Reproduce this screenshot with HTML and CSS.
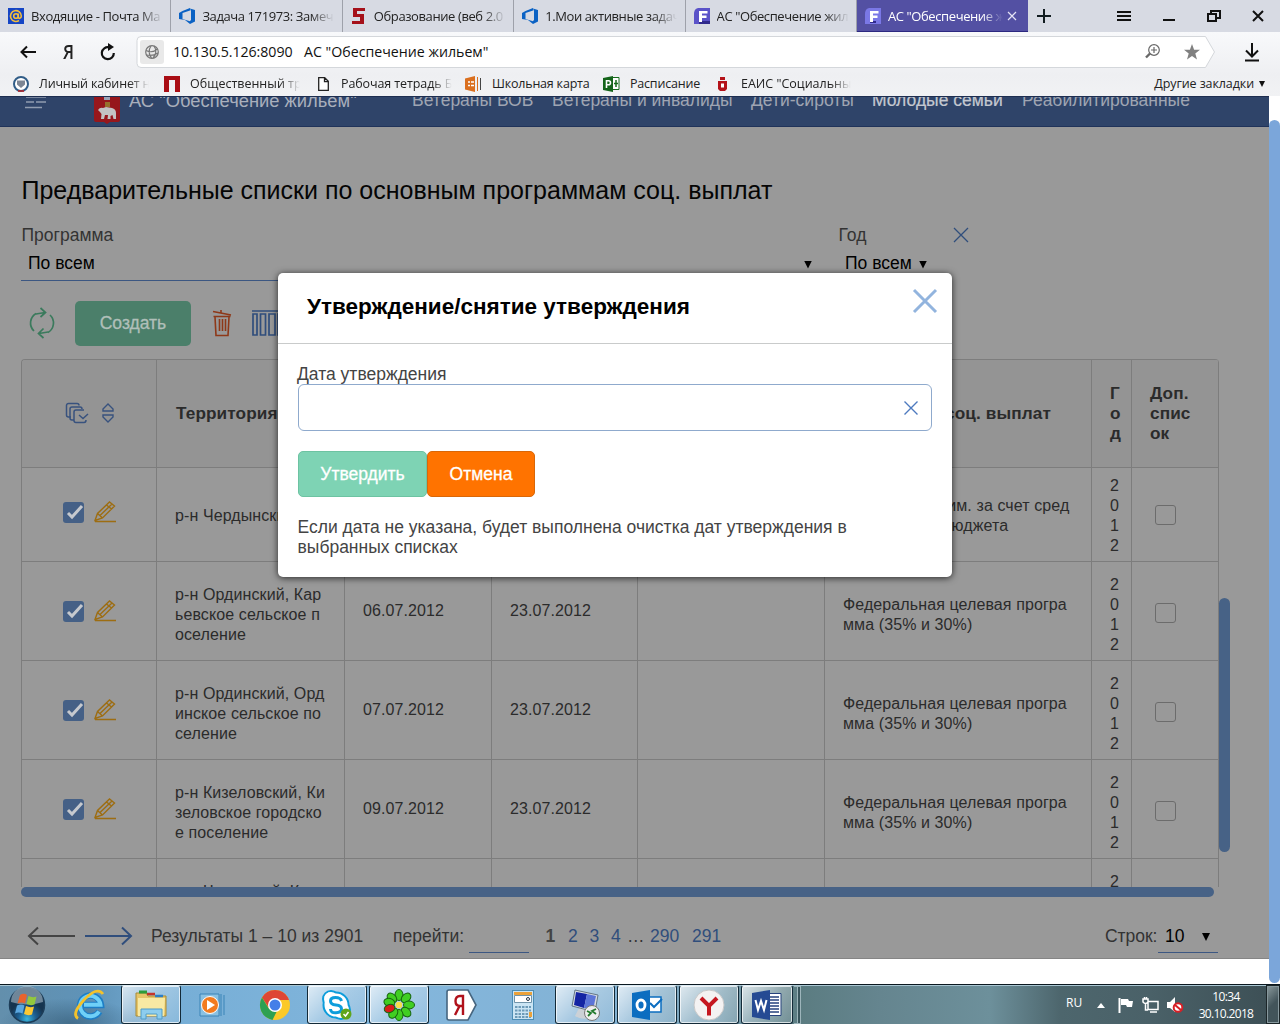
FILE: index.html
```html
<!DOCTYPE html>
<html lang="ru">
<head>
<meta charset="utf-8">
<title>АС "Обеспечение жильем"</title>
<link rel="stylesheet" href="styles.css">
</head>
<body>
<svg class="defs" width="0" height="0">
  <symbol id="devops" viewBox="0 0 16 16"><path fill="#0b62c4" d="M0 5 3.500 3 11 0v2.600L3.500 5v6L11 13.200V16l-5-4-6-1zM11 .5l5 1.500v11.500L11 16v-3.200l1-.6V3.200z"/></symbol>
  <symbol id="flet" viewBox="0 0 16 16"><path fill="#5a52c8" d="M5 0h11v16H0V6C0 2 2 0 5 0z"/><path fill="#302a8c" d="M5 13h11v3H5z"/><path fill="#fff" d="M5 3h8.500v2.500H8V7.500h4.500V10H8v4H5z"/></symbol>
  <symbol id="flet-active" viewBox="0 0 16 16"><path fill="#7a78e6" d="M5 0h11v16H0V6C0 2 2 0 5 0z"/><path fill="#302a8c" d="M5 13h6v2H5z"/><path fill="#fff" d="M5 3h8.500v2.500H8V7.500h4.500V10H8v4H5z"/></symbol>
  <symbol id="pen" viewBox="0 0 22 22"><g fill="none" stroke="#9d6d12" stroke-width="1.400"><path d="M1 20.500h21M1 19.500l2.500-7L15.500 1l5 4L8.500 17zM3.500 12.500l5 4.500M12.500 4l5 4M6 14.500 18 3"/></g></symbol>
  <symbol id="check" viewBox="0 0 21 21"><rect width="21" height="21" rx="3" fill="#456086"/><path d="m5 11 4 4 10-11" fill="none" stroke="#c6c9ce" stroke-width="3"/></symbol>
</svg>

<header class="browser">
  <div class="tabs">
    <div class="tab"><svg width="16" height="16"><rect width="16" height="16" fill="#1545c5"/><g fill="none" stroke="#f2bd3c" stroke-width="1.600"><circle cx="8" cy="8" r="2.300"/><path d="M10.300 5.500v3.500c0 2.200 3 1.500 3-1A5.400 5.400 0 1 0 11 12.500"/></g></svg><span class="fade">Входящие - Почта Ма</span></div>
    <div class="tab"><svg width="16" height="16"><use href="#devops"/></svg><span class="fade">Задача 171973: Замеч</span></div>
    <div class="tab"><svg width="16" height="16"><path fill="#a5111a" d="M2 0h12v3H6v3h7v10H1v-3h8V9H2z"/></svg><span class="fade">Образование (веб 2.0</span></div>
    <div class="tab"><svg width="16" height="16"><use href="#devops"/></svg><span class="fade">1.Мои активные задач</span></div>
    <div class="tab"><svg width="16" height="16"><use href="#flet"/></svg><span class="fade">АС "Обеспечение жил</span></div>
    <div class="tab active"><svg width="16" height="16"><use href="#flet-active"/></svg><span class="fade">АС "Обеспечение ж</span><svg class="tab-x" width="8" height="8"><path d="m0 0 8 8M8 0 0 8" stroke="#e5e3f5" stroke-width="1.200"/></svg></div>
    <svg class="plus" width="14" height="14"><path d="M7 0v14M0 7h14" stroke="#111c20" stroke-width="2"/></svg>
    <div class="window-buttons">
      <svg width="14" height="10"><path d="M0 1h14M0 5h14M0 9h14" stroke="#111" stroke-width="2"/></svg>
      <svg width="12" height="10"><path d="M0 9h12" stroke="#111" stroke-width="2"/></svg>
      <svg width="14" height="12"><g fill="none" stroke="#111" stroke-width="2"><path d="M1 4h8v7H1z"/><path d="M4 4V1h9v7H10"/></g></svg>
      <svg width="10" height="10"><path d="m0 0 10 10M10 0 0 10" stroke="#111" stroke-width="2"/></svg>
    </div>
  </div>
  <div class="address">
    <svg class="back" width="16" height="14"><path d="M16 7H2M7 1.500 1.500 7 7 12.500" fill="none" stroke="#111" stroke-width="2"/></svg>
    <span class="ya">Я</span>
    <svg class="reload" width="16" height="18"><path d="M9 4.300A6 6 0 1 0 13.800 10" fill="none" stroke="#111" stroke-width="2.200"/><path d="M8 0v8l6-4z" fill="#111"/></svg>
    <div class="field">
      <svg class="field-shape" width="1078" height="32"><path d="M4 .5h1064.500l9 15.500-9 15.500H4a4 4 0 0 1-4-4v-23a4 4 0 0 1 4-4z" fill="#fff" stroke="#d4d7db"/></svg>
      <span class="globe"><svg width="14" height="14"><g fill="none" stroke="#777" stroke-width="1.200"><circle cx="7" cy="7" r="6.300"/><path d="M1 5.500C5 7.500 9 7 12.500 4M1.500 10C6 11 10 10 13 8M6 1C3 5 4 10 6.500 13M9 1c3 4 2 9-1 12"/></g></svg></span>
      <span class="host">10.130.5.126:8090</span><span class="page-name">АС "Обеспечение жильем"</span>
      <svg class="loupe" width="15" height="15"><g fill="none" stroke="#686868" stroke-width="1.200"><circle cx="9" cy="6" r="5.300"/><path d="M9 3v6M6 6h6"/><path d="M5 9.500 1 13.500" stroke-width="2.400"/></g></svg>
      <svg class="star" width="16" height="16"><path fill="#808080" d="m8 0 2.100 5.700H16l-4.700 3.700 1.700 6L8 12l-5 3.400 1.700-6L0 5.700h5.900z"/></svg>
    </div>
    <svg class="download" width="16" height="20"><path d="M8 1v13M2 8.500l6 6 6-6M1 18.500h14" fill="none" stroke="#111" stroke-width="2"/></svg>
  </div>
  <div class="bookmarks">
    <span class="bm b1"><svg width="16" height="16"><circle cx="8" cy="8" r="7" fill="#fff" stroke="#315d88" stroke-width="2"/><path d="M4 4.500h8v4L8 12 4 8.500z" fill="#7d8694"/><path d="M5 15h6" stroke="#b22" stroke-width="1.500"/></svg><span class="fade">Личный кабинет н</span></span>
    <span class="bm b2"><svg width="16" height="16"><path fill="#a90d14" d="M0 0h16v16h-5V4H5v12H0z"/></svg><span class="fade">Общественный тр</span></span>
    <span class="bm b3"><svg width="11" height="14"><path d="M.7.7h6l3.600 3.600v9H.7zM6.500 1v3.600h3.500" fill="#fff" stroke="#222" stroke-width="1.300"/></svg><span class="fade">Рабочая тетрадь Б</span></span>
    <span class="bm b4"><svg width="17" height="16"><path fill="#da6f1f" d="M0 2.500 10 0v16L0 13.500z"/><path d="M3 6h2m1 0h3M3 9.500h2m1 0h3" stroke="#fff" stroke-width="1.600"/><path d="M12.500 1v14" stroke="#da6f1f"/><path d="M15.500 2v12" stroke="#444"/></svg><span>Школьная карта</span></span>
    <span class="bm b5"><svg width="17" height="16"><path fill="#fff" stroke="#176c1c" d="M9 1.500h7v12H9z"/><path d="M11 7.500h4M13 4v7" stroke="#176c1c" stroke-width="1.500"/><path fill="#14641a" d="M0 2 10 0v16L0 14z"/><path d="M3.500 12V4.800h2a2 2 0 0 1 0 4h-2" fill="none" stroke="#fff" stroke-width="1.600"/></svg><span>Расписание</span></span>
    <span class="bm b6"><svg width="9" height="14"><path fill="#b41219" d="M2 0h5v3H2zM0 4h9v8l-2 2H2l-2-2z"/><path fill="#fff" d="M3 6.500h3v4H3z"/></svg><span class="fade">ЕАИС "Социальны</span></span>
    <span class="bm others"><span>Другие закладки</span><svg width="6" height="6"><path d="M0 0h6L3 6z" fill="#111"/></svg></span>
  </div>
</header>

<div class="viewport">
  <div class="page">
    <div class="app-header">
      <svg class="burger" width="22" height="14"><path d="M1 1h20M1 6h8M11 6h10M0 11.500h17" stroke="#919cb0" stroke-width="1.300"/></svg>
      <svg class="crest" width="26" height="30"><path fill="#96171c" d="M0 0h26v26q0 2-3 2h-7l-3 2-3-2H3q-3 0-3-2z"/><path d="M11 8h5v5h-5z" fill="#96702c"/><path d="M10 3h6v3h-6z" fill="#9ba3b5"/><path fill="#c3c3c3" d="M4 16q2-3 5-2l3-1 6 1q4 1 4 5v6h-2.500l-1-4-2 1v3h-3l.5-4h-3l-1 4H7l.500-5-1.500-2z"/></svg>
      <span class="brand">АС "Обеспечение жильём"</span>
      <nav><a class="n1">Ветераны ВОВ</a><a class="n2">Ветераны и инвалиды</a><a class="n3">Дети-сироты</a><a class="n4">Молодые семьи</a><a class="n5">Реабилитированные</a></nav>
    </div>
    <main>
      <h1>Предварительные списки по основным программам соц. выплат</h1>
      <div class="filters">
        <div class="filter program"><label>Программа</label><div class="select"><span>По всем</span><i class="caret"></i></div></div>
        <div class="filter year"><label>Год</label><div class="select"><span>По всем</span><i class="caret"></i></div></div>
        <svg class="clear" width="14" height="14"><path d="m0 0 14 14M14 0 0 14" stroke="#304e7c" stroke-width="1.300"/></svg>
      </div>
      <div class="toolbar">
        <svg width="24" height="30"><g fill="none" stroke="#3a7a5c" stroke-width="1.700"><path d="M18 24.500A11 11 0 0 0 20 7M6 5.500A11 11 0 0 0 4 23"/><path d="M10.500 0l5 4.500-5 4.500M13.500 20.500l-5 5 5 4.500M6 6l9-1.500M9 25.500l9-1.500"/></g></svg>
        <span class="create">Создать</span>
        <svg class="trash" width="20" height="27"><g fill="none" stroke="#8e3818" stroke-width="1.600"><path d="M1 1.500l18 3.500M9 3V0M1.500 6.500h17M3 7l1 18.500h12L17 7M7.500 9v12M10.500 9v12M13.500 9v12"/></g></svg>
        <svg class="columns" width="32" height="26"><path d="M0 1h32M1 4h4v21H1zM8.500 4h5v21h-5zM17 4h6v21h-6zM26 4h5v21h-5z" fill="none" stroke="#304e7c" stroke-width="1.700"/></svg>
      </div>
      <div class="table-area">
        <div class="grid">
          <div class="row head">
            <div class="cell pick"><svg width="23" height="21"><g fill="none" stroke="#38527e" stroke-width="1.500"><path d="M5 14H2.500a2 2 0 0 1-2-2V2.500a2 2 0 0 1 2-2H11a2 2 0 0 1 2 2M8 17H6a2 2 0 0 1-2-2V6a2 2 0 0 1 2-2H14a2 2 0 0 1 2 2M20 17q0 2.500-2 2.500h-8a2 2 0 0 1-2-2V9a2 2 0 0 1 2-2h8M13 12l4 3.500 5-4.500"/></g></svg><svg class="sort" width="12" height="20"><path d="M6 1 1 6v2h10V6zM1 12h10v2l-5 5-5-5z" fill="none" stroke="#38527e" stroke-width="1.400"/></svg></div>
            <div class="cell">Территория</div><div class="cell"></div><div class="cell"></div><div class="cell"></div>
            <div class="cell program-name"><span>Программа соц. выплат</span></div><div class="cell narrow">Год</div><div class="cell extra">Доп. список</div>
          </div>
          <div class="row first">
            <div class="cell pick"><svg width="21" height="21"><use href="#check"/></svg><svg class="edit" width="22" height="22"><use href="#pen"/></svg></div>
            <div class="cell">р-н Чердынский</div><div class="cell"></div><div class="cell"></div><div class="cell"></div>
            <div class="cell"><span>Мол семьи прим. за счет сред<br>ств краевого бюджета</span></div><div class="cell narrow">2012</div><div class="cell extra"><i class="box"></i></div>
          </div>
          <div class="row">
            <div class="cell pick"><svg width="21" height="21"><use href="#check"/></svg><svg class="edit" width="22" height="22"><use href="#pen"/></svg></div>
            <div class="cell"><span>р-н Ординский, Кар<br>ьевское сельское п<br>оселение</span></div><div class="cell date">06.07.2012</div><div class="cell date">23.07.2012</div><div class="cell"></div>
            <div class="cell"><span>Федеральная целевая програ<br>мма (35% и 30%)</span></div><div class="cell narrow">2012</div><div class="cell extra"><i class="box"></i></div>
          </div>
          <div class="row">
            <div class="cell pick"><svg width="21" height="21"><use href="#check"/></svg><svg class="edit" width="22" height="22"><use href="#pen"/></svg></div>
            <div class="cell"><span>р-н Ординский, Орд<br>инское сельское по<br>селение</span></div><div class="cell date">07.07.2012</div><div class="cell date">23.07.2012</div><div class="cell"></div>
            <div class="cell"><span>Федеральная целевая програ<br>мма (35% и 30%)</span></div><div class="cell narrow">2012</div><div class="cell extra"><i class="box"></i></div>
          </div>
          <div class="row">
            <div class="cell pick"><svg width="21" height="21"><use href="#check"/></svg><svg class="edit" width="22" height="22"><use href="#pen"/></svg></div>
            <div class="cell"><span>р-н Кизеловский, Ки<br>зеловское городско<br>е поселение</span></div><div class="cell date">09.07.2012</div><div class="cell date">23.07.2012</div><div class="cell"></div>
            <div class="cell"><span>Федеральная целевая програ<br>мма (35% и 30%)</span></div><div class="cell narrow">2012</div><div class="cell extra"><i class="box"></i></div>
          </div>
          <div class="row">
            <div class="cell pick"></div>
            <div class="cell"><span>р-н Чусовской, Кал<br>инское сельское по<br>селение</span></div><div class="cell"></div><div class="cell"></div><div class="cell"></div>
            <div class="cell"></div><div class="cell narrow">2012</div><div class="cell extra"></div>
          </div>
        </div>
        <div class="vbar"></div>
      </div>
      <div class="hbar"></div>
      <div class="pager">
        <svg width="48" height="20"><path d="M48 10H2M11 1.500 2 10l9 8.500" fill="none" stroke="#444" stroke-width="2"/></svg>
        <svg class="next" width="48" height="20"><path d="M0 10h46M37 1.500l9 8.500-9 8.500" fill="none" stroke="#304e7c" stroke-width="2"/></svg>
        <span class="results">Результаты 1 – 10 из 2901</span>
        <span class="goto">перейти:</span><span class="goto-field"></span>
        <span class="p1">1</span><a class="p2">2</a><a class="p3">3</a><a class="p4">4</a><span class="dots">…</span><a class="p290">290</a><a>291</a>
        <span class="rows-label">Строк:</span><span class="rows-select"><span>10</span><i class="caret"></i></span>
      </div>
    </main>
    <div class="dialog">
      <div class="dialog-head"><h2>Утверждение/снятие утверждения</h2><svg width="24" height="24"><path d="m1 1 22 22M23 1 1 23" stroke="#92b4de" stroke-width="3"/></svg></div>
      <div class="dialog-body">
        <label>Дата утверждения</label>
        <div class="date-field"><svg width="14" height="14"><path d="m.5.5 13 13M13.500.5l-13 13" stroke="#4d7abf" stroke-width="1.400"/></svg></div>
        <div class="actions"><span class="btn approve">Утвердить</span><span class="btn cancel">Отмена</span></div>
        <p>Если дата не указана, будет выполнена очистка дат утверждения в<br>выбранных списках</p>
      </div>
    </div>
  </div>
  <div class="page-scroll"><div class="page-thumb"></div></div>
</div>

<footer class="taskbar">
  <span class="task start"><svg width="38" height="38" viewBox="0 0 38 38"><defs><radialGradient id="orb" cy=".9"><stop stop-color="#3ab6dc"/><stop offset=".5" stop-color="#1c5f92"/><stop offset="1" stop-color="#16344f"/></radialGradient></defs><circle cx="19" cy="19" r="17.500" fill="url(#orb)" stroke="#1d3d58" stroke-width="1.500"/><path d="M3 16a16 16 0 0 1 32 0q-16 5-32 0z" fill="#dceaf4" opacity=".45"/><path fill="#e9632d" d="M12 9q4-2.500 7 0l-2 8.500q-4-2-7.500 0z"/><path fill="#93c83d" d="M20.500 10q4 2 8 .5l-2 8q-4 1.500-8-.5z"/><path fill="#5aa7e0" d="M9 19.500q4-2 7.500 0l-2 8q-4-2-7.500 0z"/><path fill="#fbc833" d="M18 20q4 2 8 .5l-2 8q-4 1.500-8-.5z"/></svg></span>
  <span class="task"><svg width="32" height="32" viewBox="0 0 32 32"><path d="M26.500 22.500A10.500 10.500 0 1 1 28 16H10" fill="none" stroke="#1d7ec6" stroke-width="6.500"/><path d="M26 22.500A10.200 10.200 0 1 1 27.500 15.800H11" fill="none" stroke="#6fd0f7" stroke-width="4"/><path d="M5 29.500Q-2 25 11 11T30 5" fill="none" stroke="#f4c22b" stroke-width="2.800"/></svg></span>
  <span class="task open"><svg width="34" height="32" viewBox="0 0 34 32"><path fill="#e6c568" stroke="#a88a35" d="M2 4h10l2 3h18v20H2z"/><path fill="#f8e9a3" d="M4 9h27l-1 18H4z"/><path d="M5 3h8" stroke="#2c9c3b" stroke-width="3"/><path d="M13 5h8" stroke="#c5342b" stroke-width="2.500"/><path d="M21 7h8" stroke="#2c7ec5" stroke-width="2.500"/><path d="M7 30V20h21v10h-5v-5H12v5z" fill="#8dcdee" stroke="#4f9cc9"/></svg></span>
  <span class="task"><svg width="28" height="28" viewBox="0 0 28 28"><path fill="#8ac1e2" stroke="#3b84b7" d="M1 3h19v22H1zM22 3v22M25 4v20"/><circle cx="11" cy="14" r="8.500" fill="#f27b1f" stroke="#fff"/><path d="m8 9 8 5-8 5z" fill="#fff"/></svg></span>
  <span class="task"><svg width="30" height="30" viewBox="0 0 30 30"><circle cx="15" cy="15" r="15" fill="#fbc928"/><path fill="#de4634" d="M2 7.500A15 15 0 0 1 28 7.500L29 10H15L9 18z"/><path fill="#2ea052" d="M2 7.500 8.500 18l8 4-4 7.900A15 15 0 0 1 2 7.500z"/><circle cx="15" cy="15" r="7" fill="#fff"/><circle cx="15" cy="15" r="5.500" fill="#447fe8"/></svg></span>
  <span class="task open"><svg width="32" height="32" viewBox="0 0 32 32"><g fill="#fff" stroke="#0d9ddb" stroke-width="2"><circle cx="10" cy="10" r="8"/><circle cx="20" cy="21" r="9"/></g><circle cx="15" cy="16" r="12.500" fill="#fff" stroke="#0d9ddb" stroke-width="2"/><circle cx="10" cy="10" r="7" fill="#fff"/><circle cx="20" cy="21" r="8" fill="#fff"/><path d="M20.500 12q-1-3.500-6-3.500t-5 3.500 5.500 4 5.500 4-5.500 3.800-5.500-3.800" fill="none" stroke="#0d9ddb" stroke-width="3"/><circle cx="25" cy="25" r="5.500" fill="#60a51b"/><path d="m22.500 25 2 2 3-4" fill="none" stroke="#fff" stroke-width="1.500"/></svg></span>
  <span class="task open"><svg width="32" height="32" viewBox="0 0 32 32"><g fill="#41ce22" stroke="#17640e"><ellipse cx="16" cy="6" rx="4" ry="5.500"/><ellipse cx="16" cy="6" rx="4" ry="5.500" transform="rotate(45 16 16)"/><ellipse cx="16" cy="6" rx="4" ry="5.500" transform="rotate(90 16 16)"/><ellipse cx="16" cy="6" rx="4" ry="5.500" transform="rotate(135 16 16)"/><ellipse cx="16" cy="6" rx="4" ry="5.500" transform="rotate(180 16 16)"/><ellipse cx="16" cy="6" rx="4" ry="5.500" transform="rotate(215 16 16)"/><ellipse cx="16" cy="6" rx="4" ry="5.500" transform="rotate(315 16 16)"/><ellipse cx="16" cy="6" rx="4" ry="5.500" transform="rotate(285 16 16)"/><ellipse cx="16" cy="6" rx="4" ry="5.500" fill="#d81d1b" transform="rotate(250 16 16)"/></g><circle cx="16" cy="16" r="3.200" fill="#f9de49"/></svg></span>
  <span class="task"><svg width="32" height="32" viewBox="0 0 32 32"><path d="M2 3a2 2 0 0 1 2-2h19l8 15-8 15H4a2 2 0 0 1-2-2z" fill="#fff" stroke="#46657f" stroke-width="1.600"/><path d="M18 26V7h-3q-4.500 0-4.500 5t4.500 5h3M14.500 17 10 26" fill="none" stroke="#b0111b" stroke-width="2.400"/></svg></span>
  <span class="task"><svg width="22" height="30" viewBox="0 0 22 30"><rect x=".5" y=".5" width="21" height="29" fill="#cbe5f4" stroke="#4b8db5"/><path fill="#eba23a" d="M2 2h18v3H2z"/><path fill="#fff" stroke="#7094aa" d="M2.500 5.500h17v7h-17z"/><path d="M3 17h16M3 20.500h16M3 24h16M3 27h16" stroke="#6d9bb8" stroke-width="2" stroke-dasharray="2.500 1"/><path fill="#eba23a" d="M17 22h3v5h-3z"/><circle cx="16" cy="9" r="1.500" fill="none" stroke="#234"/></svg></span>
  <span class="task open"><svg width="32" height="32" viewBox="0 0 32 32"><path fill="#ccd1d6" d="M10 19h9l1 10q-8 2-14-2z"/><path fill="#d7dde2" stroke="#657787" d="m6 1 23 5-3 17L3 17z"/><path fill="#1424a3" d="m7 3 11 2-3 14-10-3z"/><path fill="#5c75d8" d="m18 5 9 2-3 14-9-2z"/><circle cx="23" cy="24" r="7.500" fill="#eee" stroke="#777"/><path d="m18 22 4 2-3 3M27 20l-4 2 4 3" fill="none" stroke="#247b2d" stroke-width="1.800"/></svg></span>
  <span class="task open"><svg width="32" height="32" viewBox="0 0 32 32"><path fill="#fff" stroke="#0b6dc0" stroke-width="1.500" d="M15 8h15v15H15z"/><path d="m19 14 4 4 8-8" fill="none" stroke="#0b6dc0" stroke-width="2"/><path fill="#0b6dc0" d="M1 4 19 1v30L1 28z"/><ellipse cx="10" cy="16" rx="4" ry="5" fill="none" stroke="#fff" stroke-width="2.800"/></svg></span>
  <span class="task open"><svg width="32" height="32" viewBox="0 0 32 32"><circle cx="16" cy="16" r="15" fill="#f4f2f2" stroke="#c8c8c8"/><path d="m8 9 8 8 8-8M16 17v9.500" fill="none" stroke="#c51720" stroke-width="4"/></svg></span>
  <span class="task open word"><svg width="32" height="32" viewBox="0 0 32 32"><path fill="#fff" stroke="#26427c" d="M16 4.500h14v22H16z"/><path d="M18 8h10M18 11h10M18 14h10M18 17h10M18 20h10M18 23h10" stroke="#26427c" stroke-width="1.300"/><path fill="#254a93" d="M1 4 19 1v30L1 28z"/><path d="m4.500 11 2.500 10 3-9 3 9 2.500-10" fill="none" stroke="#fff" stroke-width="2"/></svg></span>
  <span class="stack"></span>
  <span class="lang">RU</span>
  <svg class="tray-up" width="8" height="5"><path d="M0 5h8L4 0z" fill="#fff"/></svg>
  <svg class="tray-flag" width="16" height="16"><path d="M1.500 1v15" stroke="#fff" stroke-width="2"/><path fill="#fff" d="M3 2h7l1 2h4l-1 6H9L8 8H3z"/></svg>
  <svg class="tray-net" width="16" height="16"><path d="M5 4.500h10v8H5zM7 15h7M0 2h5v3q-2.500 3-5 0zM1.500 0v2M3.500 0v2M2.500 6v7H5" fill="none" stroke="#fff" stroke-width="1.500"/></svg>
  <svg class="tray-sound" width="16" height="16"><path fill="#fff" d="M0 5h3l5-5v15L3 11H0z"/><circle cx="11" cy="10.500" r="4.300" fill="#fff" stroke="#d81f26" stroke-width="2"/><path d="m8 8 6 5" stroke="#d81f26" stroke-width="2"/></svg>
  <span class="clock">10:34<br>30.10.2018</span>
  <span class="peek"></span>
</footer>
</body>
</html>
```
FILE: styles.css
```css
* { box-sizing: border-box; }
body { margin: 0; width: 1280px; height: 1024px; overflow: hidden; display: flex; flex-direction: column; font-family: "Liberation Sans", Arial, sans-serif; background: #fff; }
.defs { position: absolute; }
svg { flex: none; overflow: visible; }

/* Browser chrome */
.browser { height: 96px; flex: none; font-family: "Open Sans", "Noto Sans", sans-serif; color: #222; background: linear-gradient(#f8f9fb 32px, #eeeff2 75px, #f1f2f4 96px); }
.tabs { height: 32px; display: flex; align-items: center; background: #d7dae3; }
.tab { width: 171.400px; height: 32px; flex: none; display: flex; align-items: center; padding-left: 8px; border-right: 1px solid #9ea1aa; font-size: 13px; letter-spacing: -.4px; }
.tab .fade { margin-left: 7px; width: 132px; }
.tab.active { background: #5350a3; color: #fff; border: 0; width: 171px; border-bottom: 1px solid #2c2880; }
.tab.active .fade { width: 115px; }
.tab-x { margin-left: 5px; }
.fade { white-space: nowrap; -webkit-mask-image: linear-gradient(90deg, #000 82%, transparent); mask-image: linear-gradient(90deg, #000 82%, transparent); }
.plus { margin-left: 9px; }
.window-buttons { margin-left: auto; display: flex; align-items: center; padding-right: 17px; gap: 32px; }
.address { height: 39px; display: flex; align-items: center; padding-left: 20px; }
.ya { margin-left: 26px; width: 13px; font-size: 20px; line-height: 38px; font-weight: 600; transform: scaleX(.85); }
.reload { margin-left: 25px; }
.field { margin-left: 21px; width: 1078px; height: 32px; flex: none; display: flex; align-items: center; position: relative; font-size: 14.200px; color: #111; }
.field-shape { position: absolute; left: 0; top: 0; }
.field > :not(.field-shape) { position: relative; }
.globe { width: 24px; height: 24px; margin-left: 3px; border-radius: 3px; background: #e9e9e9; display: flex; align-items: center; justify-content: center; }
.host { margin-left: 9px; width: 131px; letter-spacing: -.05px; white-space: nowrap; }
.page-name { white-space: nowrap; }
.loupe { margin-left: auto; }
.star { margin-left: 24px; margin-right: 15px; }
.download { margin-left: 29px; }
.bookmarks { height: 25px; display: flex; align-items: center; font-size: 12.500px; }
.bm { display: flex; align-items: center; white-space: nowrap; flex: none; }
.b1 { width: 151px; padding-left: 13px; } .b1 .fade { margin-left: 10px; width: 110px; letter-spacing: -.15px; }
.b2 { width: 154px; padding-left: 13px; } .b2 .fade { margin-left: 10px; width: 110px; }
.b3 { width: 160px; padding-left: 13px; } .b3 .fade { margin-left: 12px; width: 111px; letter-spacing: -.1px; }
.b4 { width: 138px; } .b4 span { margin-left: 10px; letter-spacing: -.2px; }
.b5 { width: 115px; } .b5 span { margin-left: 10px; letter-spacing: -.2px; }
.b6 .fade { margin-left: 14px; width: 110px; }
.others { margin-left: auto; padding-right: 15px; letter-spacing: -.1px; }
.others svg { margin-left: 5px; }

/* Page */
.viewport { height: 888px; flex: none; display: flex; }
.page { width: 1269px; height: 863px; position: relative; background: #999; overflow: hidden; border-bottom: 1px solid #858585; }
.page-scroll { width: 11px; padding-top: 24px; }
.page-thumb { height: 863px; border-radius: 6px; background: #7ba6da; }
.app-header { height: 31px; overflow: hidden; display: flex; align-items: center; background: #2f4469; border-top: 1px solid #1e2e50; border-bottom: 1px solid #20335a; color: #9fa5b2; font-size: 18.350px; white-space: nowrap; }
.app-header > * { margin-top: -22px; }
.app-header .burger { margin: -1px 0 0 25px; align-self: flex-start; }
.app-header .crest { margin: -3px 0 0 47px; align-self: flex-start; }
.brand { margin-left: 9px; width: 283px; color: #a9afbc; }
nav { display: flex; font-size: 17.500px; }
nav a { flex: none; }
.n1 { width: 140px; } .n2 { width: 199px; } .n3 { width: 121px; } .n4 { width: 150px; color: #c4c8d0; -webkit-text-stroke: .2px; }
main { display: flex; flex-direction: column; padding: 0 21px; }
h1 { margin: 48px 0 0 .5px; font-size: 25px; font-weight: 400; line-height: 30px; color: #050505; white-space: nowrap; }
.filters { margin-top: 20px; height: 57px; display: flex; font-size: 17.500px; color: #333; }
.filter { height: 57px; }
.filter label { display: block; line-height: 20px; padding-left: .5px; }
.select { height: 36px; display: flex; align-items: center; justify-content: space-between; padding: 1px 0 0 7px; border-bottom: 1px solid #3c5782; color: #000; }
.program { width: 802px; } .program .select { padding-right: 11px; }
.year { margin-left: 15px; width: 104px; } .year .select { padding-right: 15px; }
.clear { margin: 3px 0 0 12px; }
.caret { width: 8px; height: 8px; flex: none; margin-top: 3px; background: #000; clip-path: polygon(0 0, 100% 0, 50% 100%); }
.toolbar { height: 77px; display: flex; align-items: center; padding: 5px 0 0 9px; }
.create { margin-left: 21px; width: 116px; height: 45px; border-radius: 5px; background: #4b7f6a; color: #b0bfb9; font-size: 17.500px; line-height: 45px; text-align: center; -webkit-text-stroke: .3px; }
.trash { margin-left: 21px; }
.columns { margin-left: 20px; }
.table-area { height: 528px; display: flex; }
.grid { width: 1198px; overflow: hidden; border-top: 1px solid #7d7d7d; border-left: 1px solid #7d7d7d; border-top-left-radius: 4px; border-top-right-radius: 4px; }
.row { display: grid; grid-template-columns: 135px 188px 147px 146px 187px 267px 40px 87px; height: 99px; font-size: 16px; line-height: 20px; color: #2b2b2b; letter-spacing: .1px; }
.row.head { height: 108px; font-size: 17.200px; font-weight: 700; background: #949494; }
.row.first { height: 94px; }
.cell { border-right: 1px solid #7d7d7d; border-bottom: 1px solid #7d7d7d; padding-left: 18px; display: flex; align-items: center; white-space: nowrap; overflow: hidden; }
.row:not(.head):not(.first) .cell > span { margin-top: 8px; }
.row.first .cell { padding-top: 2px; }
.head .cell { padding-left: 19px; padding-bottom: 2px; }
.row .cell.pick { padding: 0 0 0 41px; }
.row.first .cell.pick { padding-bottom: 4px; }
.row.head .cell.pick { padding-left: 44px; padding-bottom: 1px; }
.edit { margin: -1px 0 0 9.500px; }
.sort { margin-left: 13px; }
.row .cell.narrow { padding: 8px 12px 0 18px; white-space: normal; word-break: break-all; }
.row.first .cell.narrow { padding-top: 2px; }
.row.head .cell.narrow { padding: 0 10px 2px 18px; }
.row .cell.extra { padding: 3px 22px 0 23px; }
.row.first .cell.extra { padding-top: 0; }
.row.head .cell.extra { padding: 0 22px 2px 18px; white-space: normal; word-break: break-all; }
.box { width: 21px; height: 20px; border: 1px solid #6c6c6c; border-radius: 3px; }
.vbar { width: 11px; height: 254px; margin-top: 239px; border-radius: 6px; background: #476286; }
.hbar { width: 1193px; height: 10px; border-radius: 5px; background: #476286; }
.pager { height: 60px; display: flex; align-items: center; padding: 18px 0 0 6px; font-size: 17.500px; line-height: 34px; color: #333; white-space: nowrap; }
.next { margin-left: 10px; }
.results { margin-left: 18px; width: 242px; }
.goto { width: 76px; }
.goto-field { width: 60px; height: 34px; border-bottom: 1px solid #3c5782; }
.p1 { margin-left: 16.500px; width: 22.500px; font-weight: 700; color: #444; }
.pager a { color: #304e7c; }
.p2, .p3 { width: 21.500px; } .p4 { width: 16px; } .dots { width: 23px; } .p290 { width: 42px; }
.rows-label { margin-left: auto; width: 53px; }
.rows-select { width: 60px; height: 34px; display: flex; align-items: center; justify-content: space-between; padding: 0 8px 0 7px; border-bottom: 1px solid #3c5782; color: #000; margin-right: 30px; }
.rows-label { letter-spacing: -.05px; }

/* Dialog */
.dialog { position: absolute; left: 278px; top: 177px; width: 674px; height: 304px; border-radius: 5px; background: #fff; box-shadow: 0 1px 7px rgba(0,0,0,.75); color: #444; font-size: 17.500px; }
.dialog-head { height: 71px; display: flex; align-items: flex-start; justify-content: space-between; padding: 16px 15px 0 29px; border-bottom: 1px solid #c9cbcb; }
h2 { margin: 3px 0 0; font-size: 22.500px; line-height: 29px; color: #000; white-space: nowrap; }
.dialog-body { padding: 20px 20px 0 20px; }
.dialog-body label { display: block; line-height: 20px; margin-left: -1px; }
.date-field { height: 47px; border: 1px solid #8faacd; border-radius: 6px; display: flex; align-items: center; justify-content: flex-end; padding-right: 13px; }
.actions { display: flex; margin-top: 20px; }
.btn { height: 46px; border-radius: 5px; line-height: 44px; text-align: center; color: #fff; border: 1px solid; -webkit-text-stroke: .3px; }
.approve { width: 129px; background: #7ed3b4; border-color: #6dc3a2; }
.cancel { width: 108px; background: #ff7300; border-color: #d96708; }
p { margin: 20px 0 0 -.5px; line-height: 20px; white-space: nowrap; }

/* Taskbar */
.taskbar { height: 40px; flex: none; display: flex; align-items: center; border-top: 1px solid #0b1820; box-shadow: inset 0 1px #a9c6d2; color: #fff; font-family: "Open Sans", "Noto Sans", sans-serif; background: radial-gradient(ellipse 70px 25px at 70px 38px, rgba(40,75,100,.5), transparent), linear-gradient(90deg, #638fac 0, #5f93b8 90px, #76aed6 170px, #83b6dc 400px, #83b2d4 620px, #7aa0b2 720px, #5b7c81 800px, #65858f 880px, #6d909b 990px, #4d666d 1060px, #4a6168 1150px, #3c4e54 1280px); }
.task { width: 62px; height: 39px; flex: none; display: flex; align-items: center; justify-content: center; }
.task.start { width: 54px; margin-right: 4px; }
.task.open { width: 60px; margin: 0 1px; border: 1px solid #132a38; border-top-color: #dcecf5; border-radius: 3px; box-shadow: inset 0 0 0 1px rgba(255,255,255,.7); background: linear-gradient(135deg, rgba(255,255,255,.75), rgba(255,255,255,.3) 50%, rgba(255,255,255,.12)); }
.task.open.word { width: 52px; }
.stack { width: 7px; height: 38px; border: 1px solid #9db5bb; border-left: 0; box-shadow: inset -2px 0 #38545b, inset -3px 0 #9db5bb; }
.lang { margin: -4px 0 0 265px; width: 31px; font-size: 12px; }
.tray-up { margin-top: 2px; }
.tray-flag { margin-left: 13px; }
.tray-net { margin-left: 9px; }
.tray-sound { margin-left: 8px; }
.clock { margin-left: auto; margin-right: 12px; width: 56px; text-align: center; font-size: 12px; line-height: 17px; letter-spacing: -.65px; white-space: nowrap; }
.peek { width: 14px; height: 39px; border: 1px solid #1b2528; box-shadow: inset 0 0 0 1px #87989d; background: linear-gradient(135deg, #8b9a9d, #42545a 50%); }
```
